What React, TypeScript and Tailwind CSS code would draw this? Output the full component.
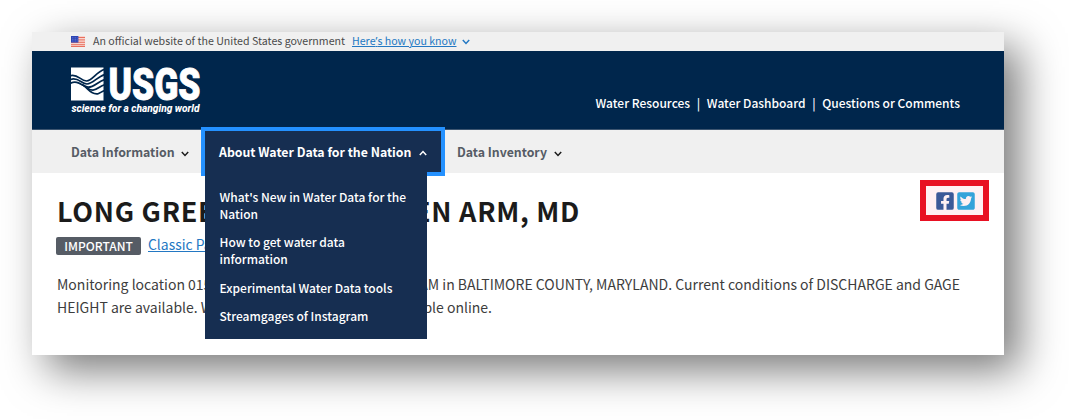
import type { ReactNode } from "react";
import { FaFacebookSquare, FaTwitterSquare } from "react-icons/fa";

const font = "font-['Noto_Sans_CJK_SC','Noto_Sans',sans-serif]";

function Chevron({ up = false, className = "" }: { up?: boolean; className?: string }) {
  return (
    <svg viewBox="0 0 8 6" className={`h-[6px] w-[8px] shrink-0 ${className}`} fill="none" stroke="currentColor" strokeWidth="1.5">
      <path d={up ? "M.8 4.9 4 1.5 7.2 4.9" : "M.8 1.1 4 4.5 7.2 1.1"} />
    </svg>
  );
}

function Flag() {
  return (
    <svg viewBox="0 0 14 11" className="h-[11px] w-[14px] shrink-0">
      <rect width="14" height="11" fill="#f7d5cf" />
      {[1, 3.4, 5.8, 8.2, 10].map((y) => (
        <rect key={y} y={y} width="14" height="1" fill="#e8705f" />
      ))}
      <rect width="7.4" height="6.6" fill="#2d44b5" />
      <path d="M1 1.8h5.6M1 3.4h5.6M1 5h5.6" stroke="#8d9ae0" strokeWidth=".6" strokeDasharray=".8 .8" />
    </svg>
  );
}

function Logo() {
  return (
    <svg viewBox="0 0 132 50" className="h-[50px] w-[132px] shrink-0" aria-label="USGS">
      <rect x="0" y="1.5" width="32.5" height="33" fill="#fff" />
      <g fill="none" stroke="#00264c" strokeWidth="1.7">
        <path d="M-1 9.8C7 7.5 9 14.6 15.5 15C21.5 14.6 25 6 33.5 3.4" />
        <path d="M-1 13.6C7 10.5 10 17.6 16 18C22 17.8 26 11 33.5 8.6" />
        <path d="M-1 17.4C7 13.5 11 20.4 17 21.2C23 21.4 27 15.6 33.5 13.6" />
        <path d="M11 18.6C16 21.6 18 24.2 22 24.2C26 24 29 20 33.5 18.8" />
        <path d="M13 19.6C18 24 21 28.6 27 27.8C29 27.2 31 25.2 33.5 24.6" />
      </g>
      <text x="37.5" y="34" fill="#fff" stroke="#fff" strokeWidth=".9" fontFamily="Roboto, sans-serif" fontWeight="900" fontSize="45" textLength="92" lengthAdjust="spacingAndGlyphs">
        USGS
      </text>
      <text x="0.5" y="45.9" fill="#fff" fontFamily="Roboto, sans-serif" fontWeight="800" fontStyle="italic" fontSize="10" textLength="128" lengthAdjust="spacingAndGlyphs">
        science for a changing world
      </text>
    </svg>
  );
}

function MenuLink({ children, className }: { children: ReactNode; className: string }) {
  return (
    <a href="#" className={`block whitespace-nowrap ${className}`}>
      {children}
    </a>
  );
}

export default function App() {
  return (
    <div className={`h-[420px] w-[1069px] overflow-hidden bg-white pt-8 pl-8 text-[#1b1b1b] ${font}`}>
      <main className="flex h-[323px] w-[972px] flex-col bg-white shadow-[15px_15px_40px_rgba(0,0,0,0.53)]">
        <section className="flex h-[19px] items-center bg-[#f0f0f0] pb-px pl-[39px] text-[10.64px] leading-none text-[#4a4a4a]">
          <Flag />
          <span className="ml-2 w-[259px] whitespace-nowrap">An official website of the United States government</span>
          <a href="#" className="whitespace-nowrap text-[#2378c3] underline">
            Here<span className="font-['Noto_Sans']">’</span>s how you know
          </a>
          <Chevron className="mt-0.5 ml-[5px] text-[#2378c3]" />
        </section>

        <header className="flex h-[79px] items-start justify-between border-b border-[#3d5570] bg-[#00264c] pt-[15px] pr-11 pl-[39px]">
          <Logo />
          <nav className="mt-[27px] flex text-[12px] leading-5 font-medium whitespace-nowrap text-white">
            <a href="#">Water Resources</a>
            <span className="px-[6.7px]">|</span>
            <a href="#">Water Dashboard</a>
            <span className="px-[6.7px]">|</span>
            <a href="#">Questions or Comments</a>
          </nav>
        </header>

        <nav className="flex h-[43px] shrink-0 items-stretch bg-[#f0f0f0] text-[12.3px] leading-5 font-bold whitespace-nowrap text-[#565c65]">
          <button className="flex w-[173px] items-center pl-[39px]">
            Data Information
            <Chevron className="mt-1 ml-1.5 text-[#1b1b1b]" />
          </button>
          <div className="relative my-px flex w-[236px]">
            <button className="flex w-full items-center bg-[#162e51] pl-[14px] text-white outline-4 outline-[#2491ff]">
              About Water Data for the Nation
              <Chevron up className="mt-[3px] ml-[7.5px]" />
            </button>
            <div className="absolute top-[40px] left-0 flex h-[168px] w-[222px] flex-col bg-[#162e51] pt-[16.6px] pl-[14.5px] text-[12px] leading-[17.3px] font-medium text-white">
              <MenuLink className="mb-[10.7px]">What's New in Water Data for the<br />Nation</MenuLink>
              <MenuLink className="mb-[11.3px]">How to get water data<br />information</MenuLink>
              <MenuLink className="mb-[11px]">Experimental Water Data tools</MenuLink>
              <MenuLink className="">Streamgages of Instagram</MenuLink>
            </div>
          </div>
          <button className="flex items-center pl-[16px]">
            Data Inventory
            <Chevron className="mt-1 ml-[7px] text-[#1b1b1b]" />
          </button>
        </nav>

        <section className="flex items-start justify-between pt-[7px] pr-[15px] pl-[25px]">
          <div>
            <h1 className="mt-[13px] flex w-[523px] justify-between text-[27px] leading-9 font-bold tracking-[0.7px] whitespace-nowrap">
              <span>LONG GREEN CR AT</span>
              <span>GLEN ARM, MD</span>
            </h1>
            <div className="mt-[8px] flex h-[18px] items-center">
              <span className="-ml-px flex h-[18px] w-[85px] items-center justify-center rounded-[2px] bg-[#565c65] text-[12px] font-medium text-white">IMPORTANT</span>
              <a href="#" className="-mt-[3px] ml-[7px] text-[13.9px] whitespace-nowrap text-[#2378c3] underline">Classic Page</a>
            </div>
            <div className="mt-[18px] w-[903px] text-[14px] leading-[23px] whitespace-nowrap text-[#3d3d3d]">
              <p className="flex justify-between">
                <span>Monitoring location 01584050 is on a</span>
                <span>STREAM in BALTIMORE COUNTY, MARYLAND. Current conditions of DISCHARGE and GAGE</span>
              </p>
              <p className="flex w-[435px] justify-between">
                <span>HEIGHT are available. Water data is</span>
                <span>also available online.</span>
              </p>
            </div>
          </div>
          <div className="-ml-20 flex h-[41px] w-[69px] shrink-0 items-center justify-center gap-px border-[6px] border-[#e81123] bg-[#fff0f3] pl-px">
            <FaFacebookSquare className="size-[20px] text-[#3b5998]" />
            <FaTwitterSquare className="size-[20px] text-[#35a3da]" />
          </div>
        </section>
      </main>
    </div>
  );
}
